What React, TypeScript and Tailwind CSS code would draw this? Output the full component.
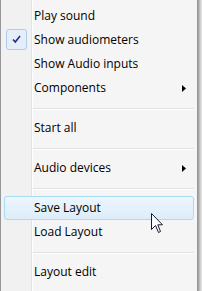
import React from 'react'

type Item =
  | { kind: 'item'; label: string; checked?: boolean; submenu?: boolean; hover?: boolean }
  | { kind: 'sep' }

const items: Item[] = [
  { kind: 'item', label: 'Play sound' },
  { kind: 'item', label: 'Show audiometers', checked: true },
  { kind: 'item', label: 'Show Audio inputs' },
  { kind: 'item', label: 'Components', submenu: true },
  { kind: 'sep' },
  { kind: 'item', label: 'Start all' },
  { kind: 'sep' },
  { kind: 'item', label: 'Audio devices', submenu: true },
  { kind: 'sep' },
  { kind: 'item', label: 'Save Layout', hover: true },
  { kind: 'item', label: 'Load Layout' },
  { kind: 'sep' },
  { kind: 'item', label: 'Layout edit' },
]

function Arrow() {
  return (
    <svg width="4" height="7" viewBox="0 0 4 7" className="shrink-0">
      <path d="M0 0 L4 3.5 L0 7 Z" fill="#000" />
    </svg>
  )
}

function CheckBox() {
  return (
    <div className="absolute left-[5px] top-[1px] h-[21px] w-[21px] rounded-[3px] border border-[#aeccea] bg-[#e6eef9] flex items-center justify-center">
      <svg width="9" height="9" viewBox="0 0 9 9">
        <path d="M1 4.5 L3.3 7 L8 1" fill="none" stroke="#1b2d8f" strokeWidth="1.6" />
      </svg>
    </div>
  )
}

function MenuRow({ item }: { item: Extract<Item, { kind: 'item' }> }) {
  if (item.hover) {
    return (
      <div className="mx-[3px] h-[24px] rounded-[3px] border border-[#a9dbf5] bg-[linear-gradient(to_bottom,#ecf6fd,#dcedf9)] flex items-center pl-[29px] pr-[8px]">
        <span className="text-[12px] leading-[22px] text-black">{item.label}</span>
      </div>
    )
  }
  return (
    <div className="relative h-[24px] flex items-center justify-between pl-[33px] pr-[11px]">
      {item.checked && <CheckBox />}
      <span className="text-[12px] leading-[24px] text-black">{item.label}</span>
      {item.submenu && <Arrow />}
    </div>
  )
}

export default function App() {
  return (
    <div className="flex h-[291px] w-[202px] overflow-hidden bg-white" style={{ fontFamily: '"Open Sans", "Noto Sans", sans-serif' }}>
      <div className="relative h-full w-[198px] shrink-0 border-l border-r border-[#979797] bg-[linear-gradient(to_right,#f1f1f1_0px,#f1f1f1_30px,#e2e3e3_30px,#e2e3e3_31px,#ffffff_31px,#ffffff_32px,#f5f5f5_32px)] pt-[4px]">
        {items.map((it, i) =>
          it.kind === 'sep' ? (
            <div key={i} className="h-[16px] pt-[8px] pl-[32px] pr-[3px]">
              <div className="h-px bg-[#e0e0e0]" />
              <div className="h-px bg-white" />
            </div>
          ) : (
            <MenuRow key={i} item={it} />
          )
        )}
        <svg
          className="absolute left-[150px] top-[213px]"
          width="13"
          height="21"
          viewBox="0 0 13 21"
        >
          <path
            d="M0.5 0.5 L0.5 16.5 L4.5 12.5 L7.5 19.5 L9.5 18.5 L6.8 11.8 L11.5 11.8 Z"
            fill="#fff"
            stroke="#1a1a2a"
            strokeWidth="1"
            strokeLinejoin="round"
          />
        </svg>
      </div>
      <div className="h-full w-[4px] bg-[linear-gradient(to_right,#9c9c9c,#cfcfcf_60%,#eaeaea)]" />
    </div>
  )
}
